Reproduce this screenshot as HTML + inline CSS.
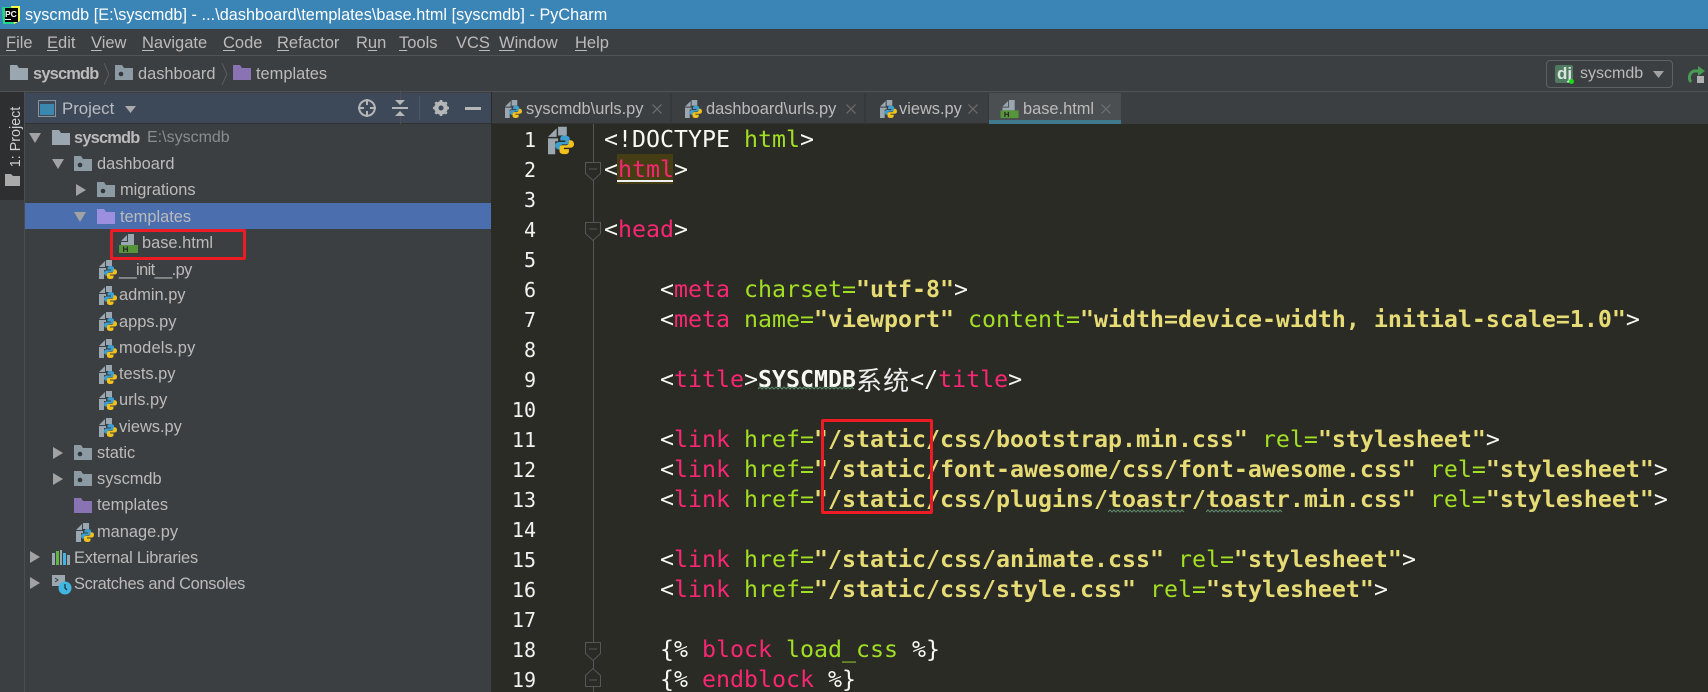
<!DOCTYPE html>
<html><head><meta charset="utf-8"><style>
html,body{margin:0;padding:0;background:#3c3f41}
#r{position:relative;width:1708px;height:692px;overflow:hidden;background:#3c3f41;font-family:"Liberation Sans","Noto Sans CJK SC",sans-serif;color:#bbbbbb}
#r div,#r span.a,#r svg.a{position:absolute}
.t{white-space:pre;font-size:16.4px;line-height:24px;height:24px}
.bd{font-weight:bold;letter-spacing:-.8px}
.c{position:absolute;left:604px;white-space:pre;font-family:"DejaVu Sans Mono","Noto Sans CJK SC",monospace;font-size:23.25px;line-height:30px;height:30px;color:#f8f8f2}
.c i{font-style:normal;color:#f92672}.c u{text-decoration:none;color:#a2de24}.c b{color:#e6db74;font-weight:bold}
.c em{font-style:normal;display:inline-block;width:27.1px;font-family:"Noto Sans CJK SC",sans-serif;font-size:26px;line-height:30px;color:#eee;vertical-align:top}
.n{position:absolute;width:40px;left:496px;text-align:right;font-family:"DejaVu Sans Mono",monospace;font-size:20px;line-height:30px;height:30px;color:#f2f2f2}
.m{font-size:16.5px;top:31px;color:#bbb}.m s{text-decoration:underline;text-underline-offset:2px}
.rb{border:3px solid #ed1c24;border-radius:2px;box-sizing:border-box}
</style></head><body><div id="r">
<svg width="0" height="0" style="position:absolute"><defs>
<symbol id="pl" viewBox="0 0 18 19"><path fill="#3d9fd0" d="M11.500 6c-2 0-3 .8-3 2v1.500H12v1H7.500C6 10.500 5 11.500 5 13s1 2.700 2.300 2.700h1.200V14c0-1 .8-1.800 1.800-1.800h3c1 0 1.700-.8 1.700-1.700V8c0-1.200-1.500-2-3.500-2z"/><path fill="#f2c11c" transform="rotate(180 11.500 12.500)" d="M11.500 6c-2 0-3 .8-3 2v1.500H12v1H7.500C6 10.500 5 11.500 5 13s1 2.700 2.300 2.700h1.200V14c0-1 .8-1.800 1.800-1.800h3c1 0 1.700-.8 1.700-1.700V8c0-1.200-1.500-2-3.500-2z"/></symbol>
<symbol id="py" viewBox="0 0 18 19"><path fill="#9aa7b0" d="M0 7l6-6v6zM7 0h6v6H7zM0 8h7v2H5v9H0z"/><use href="#pl"/></symbol>
<symbol id="ht" viewBox="0 0 19 19"><path fill="#9aa7b0" d="M2 7l6-6v6zM9 0h6v11H2V8h7z"/><rect y="11" width="19" height="8" fill="#56953a"/><path fill="#2b2b2b" d="M4 12.500h1.300v2h2.400v-2H9v5.500H7.700v-2.300H5.300V18H4z"/></symbol>
<symbol id="fo" viewBox="0 0 18 15"><path fill="#9aa7b0" d="M0 0h7l2 3h9v12H0z"/></symbol>
<symbol id="mo" viewBox="0 0 18 15"><path fill="#8c9aa4" d="M0 0h7l2 3h9v12H0z"/><circle cx="6" cy="9" r="2.300" fill="#33373a"/></symbol>
<symbol id="pu" viewBox="0 0 18 15"><path fill="#8a73b3" d="M0 0h7l2 3h9v12H0z"/></symbol>
<symbol id="ar" viewBox="0 0 10 12"><path fill="#a0a2a4" d="M0 0l10 6L0 12z"/></symbol>
<symbol id="ad" viewBox="0 0 12 10"><path fill="#a0a2a4" d="M0 0h12L6 10z"/></symbol>
<symbol id="xx" viewBox="0 0 10 10"><path d="M.5.5l9 9M9.500.5l-9 9" stroke="#6e7072" stroke-width="1.200" fill="none"/></symbol>
</defs></svg>

<!-- title bar -->
<div style="left:0;top:0;width:1708px;height:29px;background:#3a84b6"></div>
<svg class="a" style="left:1px;top:5px" width="20" height="20" viewBox="0 0 20 20"><path d="M1 2h12v17H2z" fill="#21d789"/><path d="M10 1h9v15l-6 3z" fill="#fcf84a"/><rect x="4" y="3" width="13" height="14" fill="#000"/></svg>
<div class="t" style="left:5px;top:9px;font-size:8.500px;line-height:10px;height:10px;font-weight:bold;color:#fff">PC</div>
<div style="left:5px;top:19px;width:6px;height:1px;background:#fff"></div>
<div class="t" style="left:25px;top:3px;font-size:16.200px;color:#fff;letter-spacing:.05px">syscmdb [E:\syscmdb] - ...\dashboard\templates\base.html [syscmdb] - PyCharm</div>

<!-- menu -->
<div class="t m" style="left:6px"><s>F</s>ile</div>
<div class="t m" style="left:47px"><s>E</s>dit</div>
<div class="t m" style="left:91px"><s>V</s>iew</div>
<div class="t m" style="left:142px"><s>N</s>avigate</div>
<div class="t m" style="left:223px"><s>C</s>ode</div>
<div class="t m" style="left:277px"><s>R</s>efactor</div>
<div class="t m" style="left:356px">R<s>u</s>n</div>
<div class="t m" style="left:399px"><s>T</s>ools</div>
<div class="t m" style="left:456px">VC<s>S</s></div>
<div class="t m" style="left:499px"><s>W</s>indow</div>
<div class="t m" style="left:575px"><s>H</s>elp</div>
<div style="left:0;top:55px;width:1708px;height:1px;background:#505254"></div>

<!-- breadcrumb -->
<svg class="a" style="left:10px;top:65px" width="18" height="15"><use href="#fo"/></svg>
<div class="t bd" style="left:33px;top:62px">syscmdb</div>
<svg class="a" style="left:103px;top:63px" width="8" height="22"><path d="M1 0l5 11-5 11" fill="none" stroke="#5a5c5e"/></svg>
<svg class="a" style="left:115px;top:65px" width="18" height="15"><use href="#mo"/></svg>
<div class="t" style="left:138px;top:62px">dashboard</div>
<svg class="a" style="left:221px;top:63px" width="8" height="22"><path d="M1 0l5 11-5 11" fill="none" stroke="#5a5c5e"/></svg>
<svg class="a" style="left:233px;top:65px" width="18" height="15"><use href="#pu"/></svg>
<div class="t" style="left:256px;top:62px">templates</div>
<div style="left:0;top:91px;width:1708px;height:1px;background:#505254"></div>

<!-- run config -->
<div style="left:1546px;top:60px;width:127px;height:28px;box-sizing:border-box;border:1px solid #5e6163;border-radius:4px"></div>
<div style="left:1555px;top:65px;width:18px;height:18px;background:#4f7a5f;border-radius:2px"></div>
<div class="t" style="left:1557px;top:62px;font-weight:bold;color:#d8e4dc;font-size:17px">dj</div>
<div style="left:1569px;top:79px;width:5px;height:5px;border-radius:50%;background:#13e013"></div>
<div class="t" style="left:1580px;top:62px;font-size:16px">syscmdb</div>
<svg class="a" style="left:1653px;top:71px" width="11" height="7"><path d="M0 0h11L5.500 7z" fill="#a0a2a4"/></svg>
<svg class="a" style="left:1688px;top:66px" width="20" height="19"><path d="M3 16a7 7 0 0 1 3-11h5" fill="none" stroke="#499c54" stroke-width="3"/><path d="M10 0l7 5-7 5z" fill="#499c54"/><rect x="9" y="10" width="7" height="7" fill="#aeb0b2"/></svg>

<!-- left strip -->
<div style="left:0;top:92px;width:25px;height:108px;background:#2d2f30"></div>
<div style="left:24px;top:92px;width:1px;height:600px;background:#4b4d4f"></div>
<div class="t" style="left:-19px;top:125px;width:70px;transform:rotate(-90deg);font-size:14.300px;color:#d0d0d0;text-align:center">1: Project</div>
<svg class="a" style="left:5px;top:174px" width="15" height="12"><path fill="#aaa" d="M0 0h6l2 2h7v10H0z"/></svg>

<!-- project header -->
<div style="left:25px;top:93px;width:466px;height:30px;background:#3d4858"></div>
<div style="left:25px;top:123px;width:466px;height:1px;background:#323232"></div>
<svg class="a" style="left:38px;top:100px" width="18" height="17"><rect x=".5" y=".5" width="17" height="16" fill="none" stroke="#8a949c"/><rect x="2" y="4" width="14" height="11" fill="#3b87b0"/></svg>
<div class="t" style="left:62px;top:97px;font-size:16.800px;color:#b8bcc0">Project</div>
<svg class="a" style="left:125px;top:106px" width="11" height="7"><path d="M0 0h11L5.500 7z" fill="#a8aaac"/></svg>
<svg class="a" style="left:357px;top:98px" width="20" height="20" fill="none" stroke="#b4b6b8" stroke-width="2"><circle cx="10" cy="10" r="7.800"/><path d="M10 1v6M10 13v6M1 10h6M13 10h6"/></svg>
<div style="left:400px;top:90px;width:1px;height:34px;background:#4a5058"></div>
<svg class="a" style="left:391px;top:99px" width="18" height="18"><path d="M1 9h16" stroke="#b4b6b8" stroke-width="2"/><path fill="#b4b6b8" d="M4 1h10L9 6zM4 17h10l-5-5z"/></svg>
<div style="left:419px;top:96px;width:1px;height:24px;background:#4e5760"></div>
<svg class="a" style="left:433px;top:100px" width="16" height="16"><circle cx="8" cy="8" r="5" fill="none" stroke="#b4b6b8" stroke-width="3.500"/><path d="M8 0v16M0 8h16M2.300 2.300l11.400 11.400M13.700 2.300L2.300 13.700" stroke="#b4b6b8" stroke-width="2.500"/><circle cx="8" cy="8" r="2.500" fill="#3d4858"/></svg>
<div style="left:465px;top:107px;width:16px;height:2.500px;background:#b4b6b8"></div>

<!-- tree -->
<div style="left:25px;top:203px;width:466px;height:26px;background:#4b6eaf"></div>
<svg class="a" style="left:29px;top:133px" width="12" height="10"><use href="#ad"/></svg>
<svg class="a" style="left:52px;top:130px" width="18" height="15"><use href="#fo"/></svg>
<div class="t bd" style="left:74px;top:126px">syscmdb</div>
<div class="t" style="left:147px;top:126px;color:#8a8c8e;font-size:16px">E:\syscmdb</div>

<svg class="a" style="left:52px;top:159px" width="12" height="10"><use href="#ad"/></svg>
<svg class="a" style="left:74px;top:156px" width="18" height="15"><use href="#mo"/></svg>
<div class="t" style="left:97px;top:152px">dashboard</div>

<svg class="a" style="left:76px;top:184px" width="10" height="12"><use href="#ar"/></svg>
<svg class="a" style="left:97px;top:182px" width="18" height="15"><use href="#mo"/></svg>
<div class="t" style="left:120px;top:178px">migrations</div>

<svg class="a" style="left:74px;top:212px" width="12" height="10"><use href="#ad"/></svg>
<svg class="a" style="left:97px;top:209px" width="18" height="15"><path fill="#9d8fe0" d="M0 0h7l2 3h9v12H0z" /></svg>
<div class="t" style="left:120px;top:205px">templates</div>

<svg class="a" style="left:119px;top:234px" width="19" height="19"><use href="#ht"/></svg>
<div class="t" style="left:142px;top:231px">base.html</div>

<svg class="a" style="left:99px;top:260px" width="18" height="19"><use href="#py"/></svg>
<div class="t" style="left:119px;top:258px;letter-spacing:-.6px">__init__.py</div>
<svg class="a" style="left:99px;top:286px" width="18" height="19"><use href="#py"/></svg>
<div class="t" style="left:119px;top:283px">admin.py</div>
<svg class="a" style="left:99px;top:312px" width="18" height="19"><use href="#py"/></svg>
<div class="t" style="left:119px;top:310px">apps.py</div>
<svg class="a" style="left:99px;top:339px" width="18" height="19"><use href="#py"/></svg>
<div class="t" style="left:119px;top:336px;letter-spacing:.2px">models.py</div>
<svg class="a" style="left:99px;top:365px" width="18" height="19"><use href="#py"/></svg>
<div class="t" style="left:119px;top:362px">tests.py</div>
<svg class="a" style="left:99px;top:391px" width="18" height="19"><use href="#py"/></svg>
<div class="t" style="left:119px;top:388px">urls.py</div>
<svg class="a" style="left:99px;top:418px" width="18" height="19"><use href="#py"/></svg>
<div class="t" style="left:119px;top:415px">views.py</div>

<svg class="a" style="left:53px;top:447px" width="10" height="12"><use href="#ar"/></svg>
<svg class="a" style="left:74px;top:445px" width="18" height="15"><use href="#mo"/></svg>
<div class="t" style="left:97px;top:441px">static</div>

<svg class="a" style="left:53px;top:473px" width="10" height="12"><use href="#ar"/></svg>
<svg class="a" style="left:74px;top:471px" width="18" height="15"><use href="#mo"/></svg>
<div class="t" style="left:97px;top:467px">syscmdb</div>

<svg class="a" style="left:74px;top:498px" width="18" height="15"><use href="#pu"/></svg>
<div class="t" style="left:97px;top:493px">templates</div>

<svg class="a" style="left:76px;top:523px" width="18" height="19"><use href="#py"/></svg>
<div class="t" style="left:97px;top:520px">manage.py</div>

<svg class="a" style="left:30px;top:551px" width="10" height="12"><use href="#ar"/></svg>
<svg class="a" style="left:52px;top:550px" width="18" height="15"><path d="M0 3h3v12H0z" fill="#9aa7b0"/><path d="M4 1h3v14H4z" fill="#62b543"/><path d="M8 0h2v15H8z" fill="#9aa7b0"/><path d="M11 3h3v12h-3z" fill="#40b6e0"/><path d="M15 5h3v10h-3z" fill="#9aa7b0"/></svg>
<div class="t" style="left:74px;top:546px;letter-spacing:-.2px">External Libraries</div>

<svg class="a" style="left:30px;top:577px" width="10" height="12"><use href="#ar"/></svg>
<svg class="a" style="left:52px;top:575px" width="20" height="20"><rect width="13" height="11" fill="#9aa7b0"/><path d="M3 3l3 2-3 2" fill="none" stroke="#3c3f41"/><circle cx="13" cy="13" r="6.500" fill="#40b6e0"/><path d="M13 9v4l2 2" fill="none" stroke="#1f3540" stroke-width="1.300"/></svg>
<div class="t" style="left:74px;top:572px;letter-spacing:-.3px">Scratches and Consoles</div>

<!-- editor -->
<div style="left:491px;top:92px;width:1px;height:600px;background:#2b2b2b"></div>
<div style="left:492px;top:124px;width:1216px;height:568px;background:#2a2b25"></div>

<!-- tabs -->
<div style="left:492px;top:93px;width:178px;height:31px;background:#3c3f41"></div>
<div style="left:670px;top:93px;width:2px;height:31px;background:#36383a"></div>
<div style="left:864px;top:93px;width:2px;height:31px;background:#36383a"></div>
<div style="left:988px;top:93px;width:1px;height:31px;background:#36383a"></div>
<div style="left:989px;top:93px;width:132px;height:31px;background:#4b4f52"></div>
<div style="left:989px;top:120px;width:132px;height:4px;background:#3f7b8c"></div>
<div style="left:492px;top:123px;width:497px;height:1px;background:#323232"></div>
<svg class="a" style="left:505px;top:100px" width="17" height="18"><use href="#py"/></svg>
<div class="t" style="left:526px;top:97px">syscmdb\urls.py</div>
<svg class="a" style="left:652px;top:104px" width="10" height="10"><use href="#xx"/></svg>
<svg class="a" style="left:685px;top:100px" width="17" height="18"><use href="#py"/></svg>
<div class="t" style="left:706px;top:97px">dashboard\urls.py</div>
<svg class="a" style="left:846px;top:104px" width="10" height="10"><use href="#xx"/></svg>
<svg class="a" style="left:880px;top:100px" width="17" height="18"><use href="#py"/></svg>
<div class="t" style="left:899px;top:97px">views.py</div>
<svg class="a" style="left:968px;top:104px" width="10" height="10"><use href="#xx"/></svg>
<svg class="a" style="left:1000px;top:100px" width="19" height="18"><use href="#ht"/></svg>
<div class="t" style="left:1023px;top:97px">base.html</div>
<svg class="a" style="left:1101px;top:104px" width="10" height="10"><use href="#xx"/></svg>

<!-- gutter -->
<div style="left:593px;top:124px;width:1px;height:568px;background:#55565a"></div>
<svg class="a" style="left:548px;top:126px" width="26" height="29"><use href="#py"/></svg>
<svg class="a" style="left:584px;top:161px" width="18" height="21" fill="#2a2b25" stroke="#55565a"><path d="M1.500 1.500h15v11L9 19.500l-7.500-7z"/><path d="M5 8h8"/></svg>
<svg class="a" style="left:584px;top:221px" width="18" height="21" fill="#2a2b25" stroke="#55565a"><path d="M1.500 1.500h15v11L9 19.500l-7.500-7z"/><path d="M5 8h8"/></svg>
<svg class="a" style="left:584px;top:641px" width="18" height="21" fill="#2a2b25" stroke="#55565a"><path d="M1.500 1.500h15v11L9 19.500l-7.500-7z"/><path d="M5 8h8"/></svg>
<svg class="a" style="left:584px;top:667px" width="18" height="21" fill="#2a2b25" stroke="#55565a"><path d="M1.500 19.500h15v-11L9 1.500l-7.500 7z"/><path d="M5 13h8"/></svg>

<div class="n" style="top:125px">1</div><div class="n" style="top:155px">2</div><div class="n" style="top:185px">3</div><div class="n" style="top:215px">4</div><div class="n" style="top:245px">5</div><div class="n" style="top:275px">6</div><div class="n" style="top:305px">7</div><div class="n" style="top:335px">8</div><div class="n" style="top:365px">9</div><div class="n" style="top:395px">10</div><div class="n" style="top:425px">11</div><div class="n" style="top:455px">12</div><div class="n" style="top:485px">13</div><div class="n" style="top:515px">14</div><div class="n" style="top:545px">15</div><div class="n" style="top:575px">16</div><div class="n" style="top:605px">17</div><div class="n" style="top:635px">18</div><div class="n" style="top:665px">19</div>

<!-- highlight -->
<div style="left:617px;top:154px;width:56px;height:30px;background:#453d14"></div>
<div style="left:617px;top:180px;width:56px;height:1.500px;background:#f0f0f0"></div>

<!-- code -->
<div class="c" style="top:125px">&lt;!DOCTYPE <u>html</u>&gt;</div>
<div class="c" style="top:155px">&lt;<i>html</i>&gt;</div>
<div class="c" style="top:215px">&lt;<i>head</i>&gt;</div>
<div class="c" style="top:275px">    &lt;<i>meta</i> <u>charset=</u><b>"utf-8"</b>&gt;</div>
<div class="c" style="top:305px">    &lt;<i>meta</i> <u>name=</u><b>"viewport"</b> <u>content=</u><b>"width=device-width, initial-scale=1.0"</b>&gt;</div>
<div class="c" style="top:365px">    &lt;<i>title</i>&gt;<span style="font-weight:bold">SYSCMDB</span><em>系</em><em>统</em>&lt;/<i>title</i>&gt;</div>
<div class="c" style="top:425px">    &lt;<i>link</i> <u>href=</u><b>"/static/css/bootstrap.min.css"</b> <u>rel=</u><b>"stylesheet"</b>&gt;</div>
<div class="c" style="top:455px">    &lt;<i>link</i> <u>href=</u><b>"/static/font-awesome/css/font-awesome.css"</b> <u>rel=</u><b>"stylesheet"</b>&gt;</div>
<div class="c" style="top:485px">    &lt;<i>link</i> <u>href=</u><b>"/static/css/plugins/toastr/toastr.min.css"</b> <u>rel=</u><b>"stylesheet"</b>&gt;</div>
<div class="c" style="top:545px">    &lt;<i>link</i> <u>href=</u><b>"/static/css/animate.css"</b> <u>rel=</u><b>"stylesheet"</b>&gt;</div>
<div class="c" style="top:575px">    &lt;<i>link</i> <u>href=</u><b>"/static/css/style.css"</b> <u>rel=</u><b>"stylesheet"</b>&gt;</div>
<div class="c" style="top:635px">    {% <i>block</i> <u>load_css</u> %}</div>
<div class="c" style="top:665px">    {% <i>endblock</i> %}</div>

<!-- squiggles -->
<svg class="a" style="left:758px;top:386px" width="98" height="4"><path d="M0 3l2-2 2 2 2-2 2 2 2-2 2 2 2-2 2 2 2-2 2 2 2-2 2 2 2-2 2 2 2-2 2 2 2-2 2 2 2-2 2 2 2-2 2 2 2-2 2 2 2-2 2 2 2-2 2 2 2-2 2 2 2-2 2 2 2-2 2 2 2-2 2 2 2-2 2 2 2-2 2 2 2-2 2 2 2-2 2 2 2-2 2 2 2-2 2 2" fill="none" stroke="#5f8a6a"/></svg>
<svg class="a" style="left:1108px;top:509px" width="84" height="4"><path d="M0 3l2-2 2 2 2-2 2 2 2-2 2 2 2-2 2 2 2-2 2 2 2-2 2 2 2-2 2 2 2-2 2 2 2-2 2 2 2-2 2 2 2-2 2 2 2-2 2 2 2-2 2 2 2-2 2 2 2-2 2 2 2-2 2 2 2-2 2 2 2-2 2 2 2-2 2 2" fill="none" stroke="#5f8a6a"/></svg>
<svg class="a" style="left:1206px;top:509px" width="84" height="4"><path d="M0 3l2-2 2 2 2-2 2 2 2-2 2 2 2-2 2 2 2-2 2 2 2-2 2 2 2-2 2 2 2-2 2 2 2-2 2 2 2-2 2 2 2-2 2 2 2-2 2 2 2-2 2 2 2-2 2 2 2-2 2 2 2-2 2 2 2-2 2 2 2-2 2 2 2-2 2 2" fill="none" stroke="#5f8a6a"/></svg>

<!-- red boxes -->
<div class="rb" style="left:110px;top:229px;width:136px;height:31px"></div>
<div class="rb" style="left:821px;top:419px;width:112px;height:95px"></div>
</div></body></html>
